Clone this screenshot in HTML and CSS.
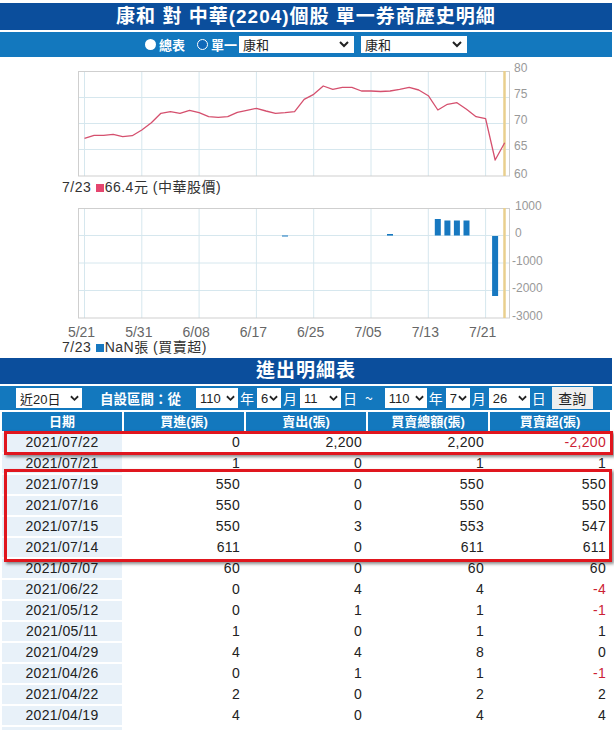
FILE: index.html
```html
<!DOCTYPE html>
<html lang="zh-Hant">
<head>
<meta charset="utf-8">
<title>康和 對 中華(2204)個股 單一券商歷史明細</title>
<link rel="stylesheet" href="styles.css">
</head>
<body>
<div class="page">
  <div class="title">康和 對 中華(2204)個股 單一券商歷史明細</div>
  <div class="ctrl">
    <span class="radio on"></span><span class="lbl">總表</span>
    <span class="radio ring"></span><span class="lbl">單一</span>
    <span class="sel w1"><span>康和</span><svg class="chev" width="10" height="7" viewBox="0 0 10 7"><polyline points="1,1 5,5 9,1" fill="none" stroke="#222" stroke-width="2"/></svg></span>
    <span class="sel w2"><span>康和</span><svg class="chev" width="10" height="7" viewBox="0 0 10 7"><polyline points="1,1 5,5 9,1" fill="none" stroke="#222" stroke-width="2"/></svg></span>
  </div>

  <div class="charts">
    <svg class="chart1" width="614" height="123" viewBox="0 57 614 123">
      <g class="grid">
        <line x1="78" y1="97.5" x2="510" y2="97.5"/>
        <line x1="78" y1="123.5" x2="510" y2="123.5"/>
        <line x1="78" y1="149.5" x2="510" y2="149.5"/>
        <line x1="84.5" y1="71" x2="84.5" y2="176"/>
        <line x1="141.8" y1="71" x2="141.8" y2="176"/>
        <line x1="199.1" y1="71" x2="199.1" y2="176"/>
        <line x1="256.4" y1="71" x2="256.4" y2="176"/>
        <line x1="313.7" y1="71" x2="313.7" y2="176"/>
        <line x1="371" y1="71" x2="371" y2="176"/>
        <line x1="428.3" y1="71" x2="428.3" y2="176"/>
        <line x1="485.6" y1="71" x2="485.6" y2="176"/>
      </g>
      <rect class="frame" x="78.5" y="71.5" width="431" height="104.5"/>
      <line class="now" x1="504.5" y1="71" x2="504.5" y2="176"/>
      <polyline class="price" points="84.5,138.3 94.05,135.3 103.6,135.3 113.15,134.3 122.7,136.7 132.25,135.7 141.8,130 151.35,122.7 160.9,113.3 170.45,111.7 180,113.3 189.55,110.3 199.1,112.7 208.65,116.7 218.2,117.3 227.75,116.7 237.3,112.3 246.85,110.3 256.4,108.3 265.95,111 275.5,113.3 285.05,112.7 294.6,111.7 304.15,99.3 313.7,94.3 323.25,86 332.8,89.3 342.35,87.3 351.9,87.3 361.45,91 371,91 380.55,91.5 390.1,91 399.65,89.3 409.2,87.3 418.75,90 428.3,95.7 437.85,110 447.4,104.3 456.95,102.7 466.5,109.3 476.05,116.7 485.6,118.7 495.15,160 504.7,142.7"/>
      <g class="ylab">
        <text x="514" y="72">80</text>
        <text x="514" y="98">75</text>
        <text x="514" y="124">70</text>
        <text x="514" y="150">65</text>
        <text x="514" y="178">60</text>
      </g>
    </svg>
    <div class="legend"><span>7/23</span> <i class="sq pink"></i><span>66.4元 (中華股價)</span></div>

    <svg class="chart2" width="614" height="146" viewBox="0 194 614 146">
      <g class="grid">
        <line x1="78" y1="235.5" x2="510" y2="235.5"/>
        <line x1="78" y1="263" x2="510" y2="263"/>
        <line x1="78" y1="290.5" x2="510" y2="290.5"/>
        <line x1="84.5" y1="208" x2="84.5" y2="318"/>
        <line x1="141.8" y1="208" x2="141.8" y2="318"/>
        <line x1="199.1" y1="208" x2="199.1" y2="318"/>
        <line x1="256.4" y1="208" x2="256.4" y2="318"/>
        <line x1="313.7" y1="208" x2="313.7" y2="318"/>
        <line x1="371" y1="208" x2="371" y2="318"/>
        <line x1="428.3" y1="208" x2="428.3" y2="318"/>
        <line x1="485.6" y1="208" x2="485.6" y2="318"/>
      </g>
      <rect class="frame" x="78.5" y="208.5" width="431" height="109.5"/>
      <line class="now" x1="504.5" y1="208" x2="504.5" y2="318"/>
      <g class="bars">
        <rect x="282" y="235.5" width="6" height="1"/>
        <rect x="387" y="234" width="6" height="1.6"/>
        <rect x="434.8" y="219" width="6" height="16.5"/>
        <rect x="444.4" y="220.5" width="6" height="15"/>
        <rect x="453.9" y="220.5" width="6" height="15"/>
        <rect x="463.5" y="220.5" width="6" height="15"/>
        <rect x="492.1" y="236" width="6" height="60"/>
      </g>
      <g class="ylab">
        <text x="515" y="210">1000</text>
        <text x="515" y="237">0</text>
        <text x="512" y="265">-1000</text>
        <text x="512" y="292">-2000</text>
        <text x="512" y="320">-3000</text>
      </g>
      <g class="xlab">
        <text x="81.5" y="337">5/21</text>
        <text x="138.8" y="337">5/31</text>
        <text x="196.1" y="337">6/08</text>
        <text x="253.4" y="337">6/17</text>
        <text x="310.7" y="337">6/25</text>
        <text x="368" y="337">7/05</text>
        <text x="425.3" y="337">7/13</text>
        <text x="482.6" y="337">7/21</text>
      </g>
    </svg>
    <div class="legend l2"><span>7/23</span> <i class="sq blue"></i><span>NaN張 (買賣超)</span></div>
  </div>

  <div class="title t2">進出明細表</div>
  <div class="ctrl2">
    <span class="sel s20">近20日<svg class="chev" width="9" height="7" viewBox="0 0 10 7"><polyline points="1,1 5,5 9,1" fill="none" stroke="#222" stroke-width="2"/></svg></span>
    <span class="range">自設區間：從</span>
    <span class="sel s3">110<svg class="chev" width="9" height="7" viewBox="0 0 10 7"><polyline points="1,1 5,5 9,1" fill="none" stroke="#222" stroke-width="2"/></svg></span>
    <span class="u">年</span>
    <span class="sel s1">6<svg class="chev" width="9" height="7" viewBox="0 0 10 7"><polyline points="1,1 5,5 9,1" fill="none" stroke="#222" stroke-width="2"/></svg></span>
    <span class="u">月</span>
    <span class="sel s2">11<svg class="chev" width="9" height="7" viewBox="0 0 10 7"><polyline points="1,1 5,5 9,1" fill="none" stroke="#222" stroke-width="2"/></svg></span>
    <span class="u">日</span>
    <span class="u tilde">~</span>
    <span class="sel s3">110<svg class="chev" width="9" height="7" viewBox="0 0 10 7"><polyline points="1,1 5,5 9,1" fill="none" stroke="#222" stroke-width="2"/></svg></span>
    <span class="u">年</span>
    <span class="sel s1">7<svg class="chev" width="9" height="7" viewBox="0 0 10 7"><polyline points="1,1 5,5 9,1" fill="none" stroke="#222" stroke-width="2"/></svg></span>
    <span class="u">月</span>
    <span class="sel s2">26<svg class="chev" width="9" height="7" viewBox="0 0 10 7"><polyline points="1,1 5,5 9,1" fill="none" stroke="#222" stroke-width="2"/></svg></span>
    <span class="u">日</span>
    <span class="btn">查詢</span>
  </div>

  <table class="tbl">
    <thead>
      <tr><th>日期</th><th>買進(張)</th><th>賣出(張)</th><th>買賣總額(張)</th><th>買賣超(張)</th></tr>
    </thead>
    <tbody>
      <tr><td class="d">2021/07/22</td><td>0</td><td>2,200</td><td>2,200</td><td class="neg">-2,200</td></tr>
      <tr><td class="d">2021/07/21</td><td>1</td><td>0</td><td>1</td><td>1</td></tr>
      <tr><td class="d">2021/07/19</td><td>550</td><td>0</td><td>550</td><td>550</td></tr>
      <tr><td class="d">2021/07/16</td><td>550</td><td>0</td><td>550</td><td>550</td></tr>
      <tr><td class="d">2021/07/15</td><td>550</td><td>3</td><td>553</td><td>547</td></tr>
      <tr><td class="d">2021/07/14</td><td>611</td><td>0</td><td>611</td><td>611</td></tr>
      <tr><td class="d">2021/07/07</td><td>60</td><td>0</td><td>60</td><td>60</td></tr>
      <tr><td class="d">2021/06/22</td><td>0</td><td>4</td><td>4</td><td class="neg">-4</td></tr>
      <tr><td class="d">2021/05/12</td><td>0</td><td>1</td><td>1</td><td class="neg">-1</td></tr>
      <tr><td class="d">2021/05/11</td><td>1</td><td>0</td><td>1</td><td>1</td></tr>
      <tr><td class="d">2021/04/29</td><td>4</td><td>4</td><td>8</td><td>0</td></tr>
      <tr><td class="d">2021/04/26</td><td>0</td><td>1</td><td>1</td><td class="neg">-1</td></tr>
      <tr><td class="d">2021/04/22</td><td>2</td><td>0</td><td>2</td><td>2</td></tr>
      <tr><td class="d">2021/04/19</td><td>4</td><td>0</td><td>4</td><td>4</td></tr>
      <tr class="more"><td class="d"></td><td></td><td></td><td></td><td></td></tr>
    </tbody>
  </table>

  <div class="hl hl1"></div>
  <div class="hl hl2"></div>
</div>
</body>
</html>
```

FILE: styles.css
```css
body {
  margin: 0;
  background: #fff;
  font-family: "Liberation Sans", "Noto Sans CJK TC", sans-serif;
  color: #222;
}
.page {
  position: relative;
  width: 612px;
  padding-top: 3px;
}
.title {
  background: #0b4e9c;
  color: #fff;
  height: 27px;
  line-height: 27px;
  text-align: center;
  font-family: "Liberation Sans", "Noto Sans CJK TC", sans-serif;
  font-size: 19px;
  font-weight: bold;
  letter-spacing: 1px;
}
.ctrl {
  margin-top: 2px;
  height: 25px;
  background: #1378be;
  display: flex;
  align-items: center;
  justify-content: center;
  color: #fff;
  font-size: 13px;
  font-family: "Noto Sans CJK TC", sans-serif;
}
.radio {
  width: 11px;
  height: 11px;
  border-radius: 50%;
  box-sizing: border-box;
  margin-right: 3px;
}
.radio.on { background: #fff; }
.radio.ring { border: 1.5px solid #fff; background: #1068b8; }
.lbl { margin-right: 12px; font-weight: bold; }
.ctrl .lbl:nth-of-type(4) { margin-right: 2px; }
.sel {
  display: inline-flex;
  align-items: center;
  justify-content: space-between;
  background: #fff;
  color: #222;
  box-sizing: border-box;
  font-size: 13px;
  font-family: "Liberation Sans", "Noto Sans CJK TC", sans-serif;
  padding: 0 5px 0 4px;
}
.ctrl .sel { height: 17px; }
.w1 { width: 115px; margin-right: 7px; }
.w2 { width: 106px; }
.chev { flex: none; }

.charts { height: 297px; }
.charts svg { display: block; }
.grid line { stroke: #d6e7ee; stroke-width: 1; }
.frame { fill: none; stroke: #cfcfcf; stroke-width: 1; }
.now { stroke: #e9cf8e; stroke-width: 2.5; }
.price { fill: none; stroke: #d5506e; stroke-width: 1.3; stroke-linejoin: round; }
.bars rect { fill: #1778c0; }
.ylab text { fill: #999; font-size: 12px; font-family: "Liberation Sans", sans-serif; }
.xlab text { fill: #666; font-size: 14px; text-anchor: middle; font-family: "Liberation Sans", sans-serif; }
.legend {
  height: 14px;
  line-height: 14px;
  padding-left: 62px;
  font-size: 14px;
  color: #333;
  letter-spacing: 0.5px;
  font-family: "Liberation Sans", "Noto Sans CJK TC", sans-serif;
  white-space: nowrap;
}
.legend.l2 { margin-top: 1px; height: 13px; line-height: 13px; }
.sq {
  display: inline-block;
  width: 8px;
  height: 8px;
  margin-right: 1px;
}
.sq.pink { background: #e5466f; }
.sq.blue { background: #1778c0; }

.t2 { height: 26px; line-height: 26px; margin-top: 4px; }
.ctrl2 {
  margin-top: 2px;
  height: 24px;
  background: #1378be;
  display: flex;
  align-items: center;
  padding-left: 16px;
  color: #fff;
  font-size: 14px;
  font-family: "Noto Sans CJK TC", sans-serif;
}
.ctrl2 .sel { height: 20px; font-size: 13px; padding: 0 3px 0 4px; }
.s20 { width: 66px; }
.s3 { width: 42px; }
.s1 { width: 24px; }
.s2 { width: 41px; }
.range { margin: 0 15px 0 18px; font-weight: bold; font-size: 13.5px; }
.u { margin: 0 3px 0 2px; }
.tilde { margin: 0 12px 0 5px; }
.btn {
  margin-left: 3px;
  width: 41px;
  height: 22px;
  line-height: 22px;
  text-align: center;
  background: #efefef;
  color: #222;
  font-size: 14px;
}

.tbl {
  width: 612px;
  border-collapse: separate;
  border-spacing: 2px;
  font-size: 14px;
  table-layout: fixed;
}
.tbl th {
  background: #1378be;
  color: #fff;
  font-size: 13px;
  font-weight: bold;
  font-family: "Liberation Sans", "Noto Sans CJK TC", sans-serif;
  height: 19px;
  padding: 0;
  line-height: 19px;
}
.tbl td {
  height: 19px;
  padding: 0 4px 0 0;
  line-height: 19px;
  text-align: right;
  color: #222;
  letter-spacing: 0.3px;
}
.tbl td.d {
  background: #e8f1f9;
  text-align: center;
  padding: 0;
}
.tbl td.neg { color: #cc1f35; }

.hl {
  position: absolute;
  border: 3px solid #e0161e;
  box-shadow: 2px 2px 3px rgba(0,0,0,0.45);
  box-sizing: border-box;
}
.hl1 { left: 4px; top: 431px; width: 609px; height: 24px; }
.hl2 { left: 4px; top: 469px; width: 608px; height: 93px; }
```
